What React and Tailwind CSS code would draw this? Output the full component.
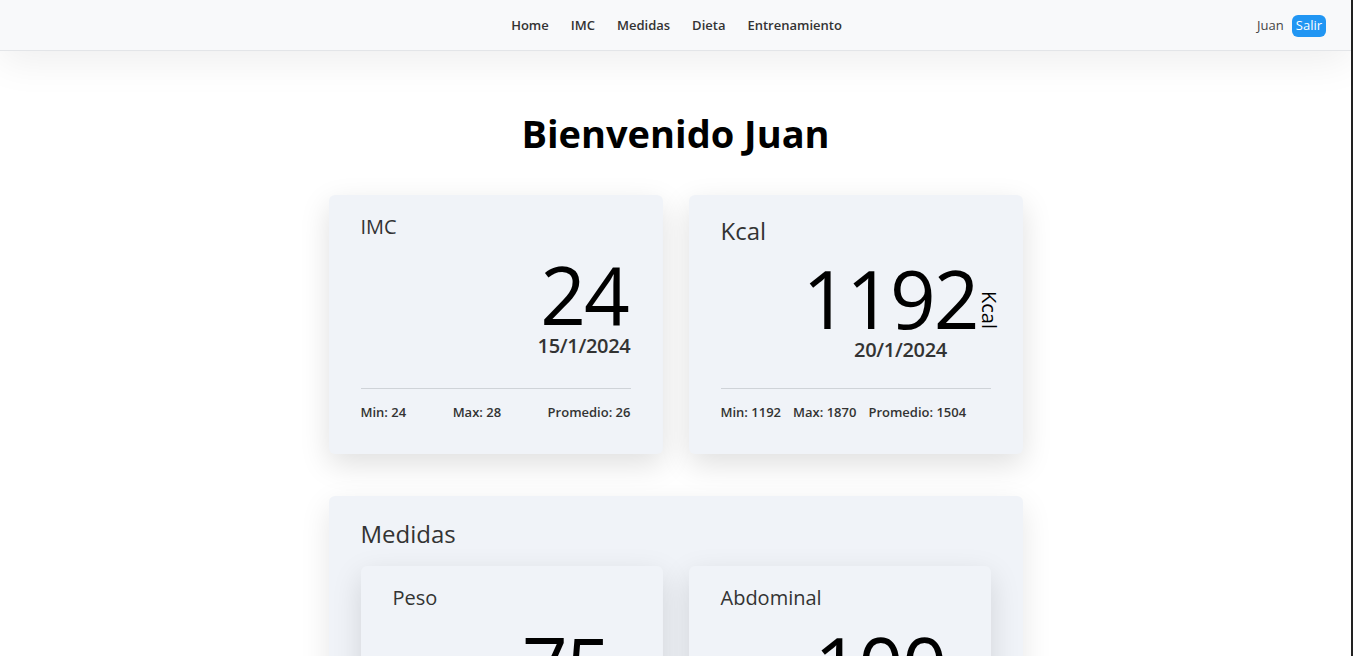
import React from "react";

const links = ["Home", "IMC", "Medidas", "Dieta", "Entrenamiento"];

function Navbar() {
  return (
    <nav className="relative z-10 flex h-[51px] items-center border-b border-[#e3e5e8] bg-[#f8f9fa] pt-px pl-[25px] pr-[25px] shadow-[0_10px_40px_rgba(0,0,0,0.07)]">
      <div className="flex-1" />
      <ul className="ml-[2px] flex items-center gap-[22px] text-[13px] font-semibold text-[#333]">
        {links.map((l) => (
          <li key={l}>{l}</li>
        ))}
      </ul>
      <div className="flex flex-1 items-center justify-end gap-2 text-[13px] text-[#444]">
        <span>Juan</span>
        <button className="h-[22px] rounded-md bg-[#2196f3] px-1 text-[13px] text-white">Salir</button>
      </div>
    </nav>
  );
}

// big value with a small rotated unit beside it
function Value({ value, unit, date }) {
  return (
    <div className="flex justify-end">
      <div className="flex flex-col items-center">
        <div className="flex items-end">
          <span className="text-[80px] leading-none font-medium tracking-[-2px] text-black">{value}</span>
          {unit && (
            <span className="mb-[9px] ml-px text-[20px] leading-none font-medium text-black [writing-mode:vertical-rl]">
              {unit}
            </span>
          )}
        </div>
        <span className="-mt-[2px] text-xl leading-7 font-semibold tracking-[-0.3px] text-[#333]">{date}</span>
      </div>
    </div>
  );
}

function Card({ title, big, children }) {
  return (
    <div
      className={`flex flex-col rounded-md bg-[#f0f3f8] px-8 pb-8 shadow-[0_10px_30px_rgba(0,0,0,0.13)] ${
        big ? "pt-5" : "pt-[18px]"
      }`}
    >
      <h3 className={big ? "text-2xl leading-8 font-medium text-[#333]" : "text-xl leading-7 font-medium text-[#333]"}>
        {title}
      </h3>
      {children}
    </div>
  );
}

function Stats({ items, spread }) {
  return (
    <div className="mt-auto">
      <div className="h-px bg-[#cfd3d8]" />
      <div
        className={`mt-[13px] flex text-[13px] leading-5 font-semibold text-[#333] ${
          spread ? "justify-between" : "gap-[12px]"
        }`}
      >
        {items.map((s) => (
          <span key={s}>{s}</span>
        ))}
      </div>
    </div>
  );
}

export default function App() {
  return (
    <div
      className="min-h-screen border-r-2 border-[#222] bg-white"
      style={{ fontFamily: '"Open Sans", sans-serif' }}
    >
      <Navbar />
      <main className="mx-auto w-[694px] pb-16">
        <h1 className="mt-[62px] text-center text-[38px] leading-10 font-bold text-black">Bienvenido Juan</h1>

        <div className="mt-[42px] grid grid-cols-2 gap-[26px]">
          <Card title="IMC">
            <div className="mt-[13px]">
              <Value value="24" date="15/1/2024" />
            </div>
            <div className="mt-7 flex flex-1 flex-col">
              <Stats items={["Min: 24", "Max: 28", "Promedio: 26"]} spread />
            </div>
          </Card>
          <Card title="Kcal" big>
            <div className="-mr-2 mt-[11px]">
              <Value value="1192" unit="Kcal" date="20/1/2024" />
            </div>
            <div className="mt-6 flex flex-1 flex-col">
              <Stats items={["Min: 1192", "Max: 1870", "Promedio: 1504"]} />
            </div>
          </Card>
        </div>

        <section className="mt-[42px] rounded-md bg-[#f0f3f8] px-8 pt-[22px] pb-8 shadow-[0_10px_30px_rgba(0,0,0,0.1)]">
          <h2 className="text-2xl leading-8 font-medium text-[#333]">Medidas</h2>
          <div className="mt-4 grid grid-cols-2 gap-[26px]">
            <Card title="Peso">
              <div className="mt-[13px]">
                <Value value="75" unit="Kg" date="18/1/2024" />
              </div>
              <div className="mt-7 flex flex-1 flex-col">
                <Stats items={["Min: 75", "Max: 82", "Promedio: 78"]} spread />
              </div>
            </Card>
            <Card title="Abdominal">
              <div className="-mr-2 mt-[13px]">
                <Value value="100" unit="cm" date="18/1/2024" />
              </div>
              <div className="mt-7 flex flex-1 flex-col">
                <Stats items={["Min: 100", "Max: 108", "Promedio: 104"]} spread />
              </div>
            </Card>
          </div>
        </section>
      </main>
    </div>
  );
}
